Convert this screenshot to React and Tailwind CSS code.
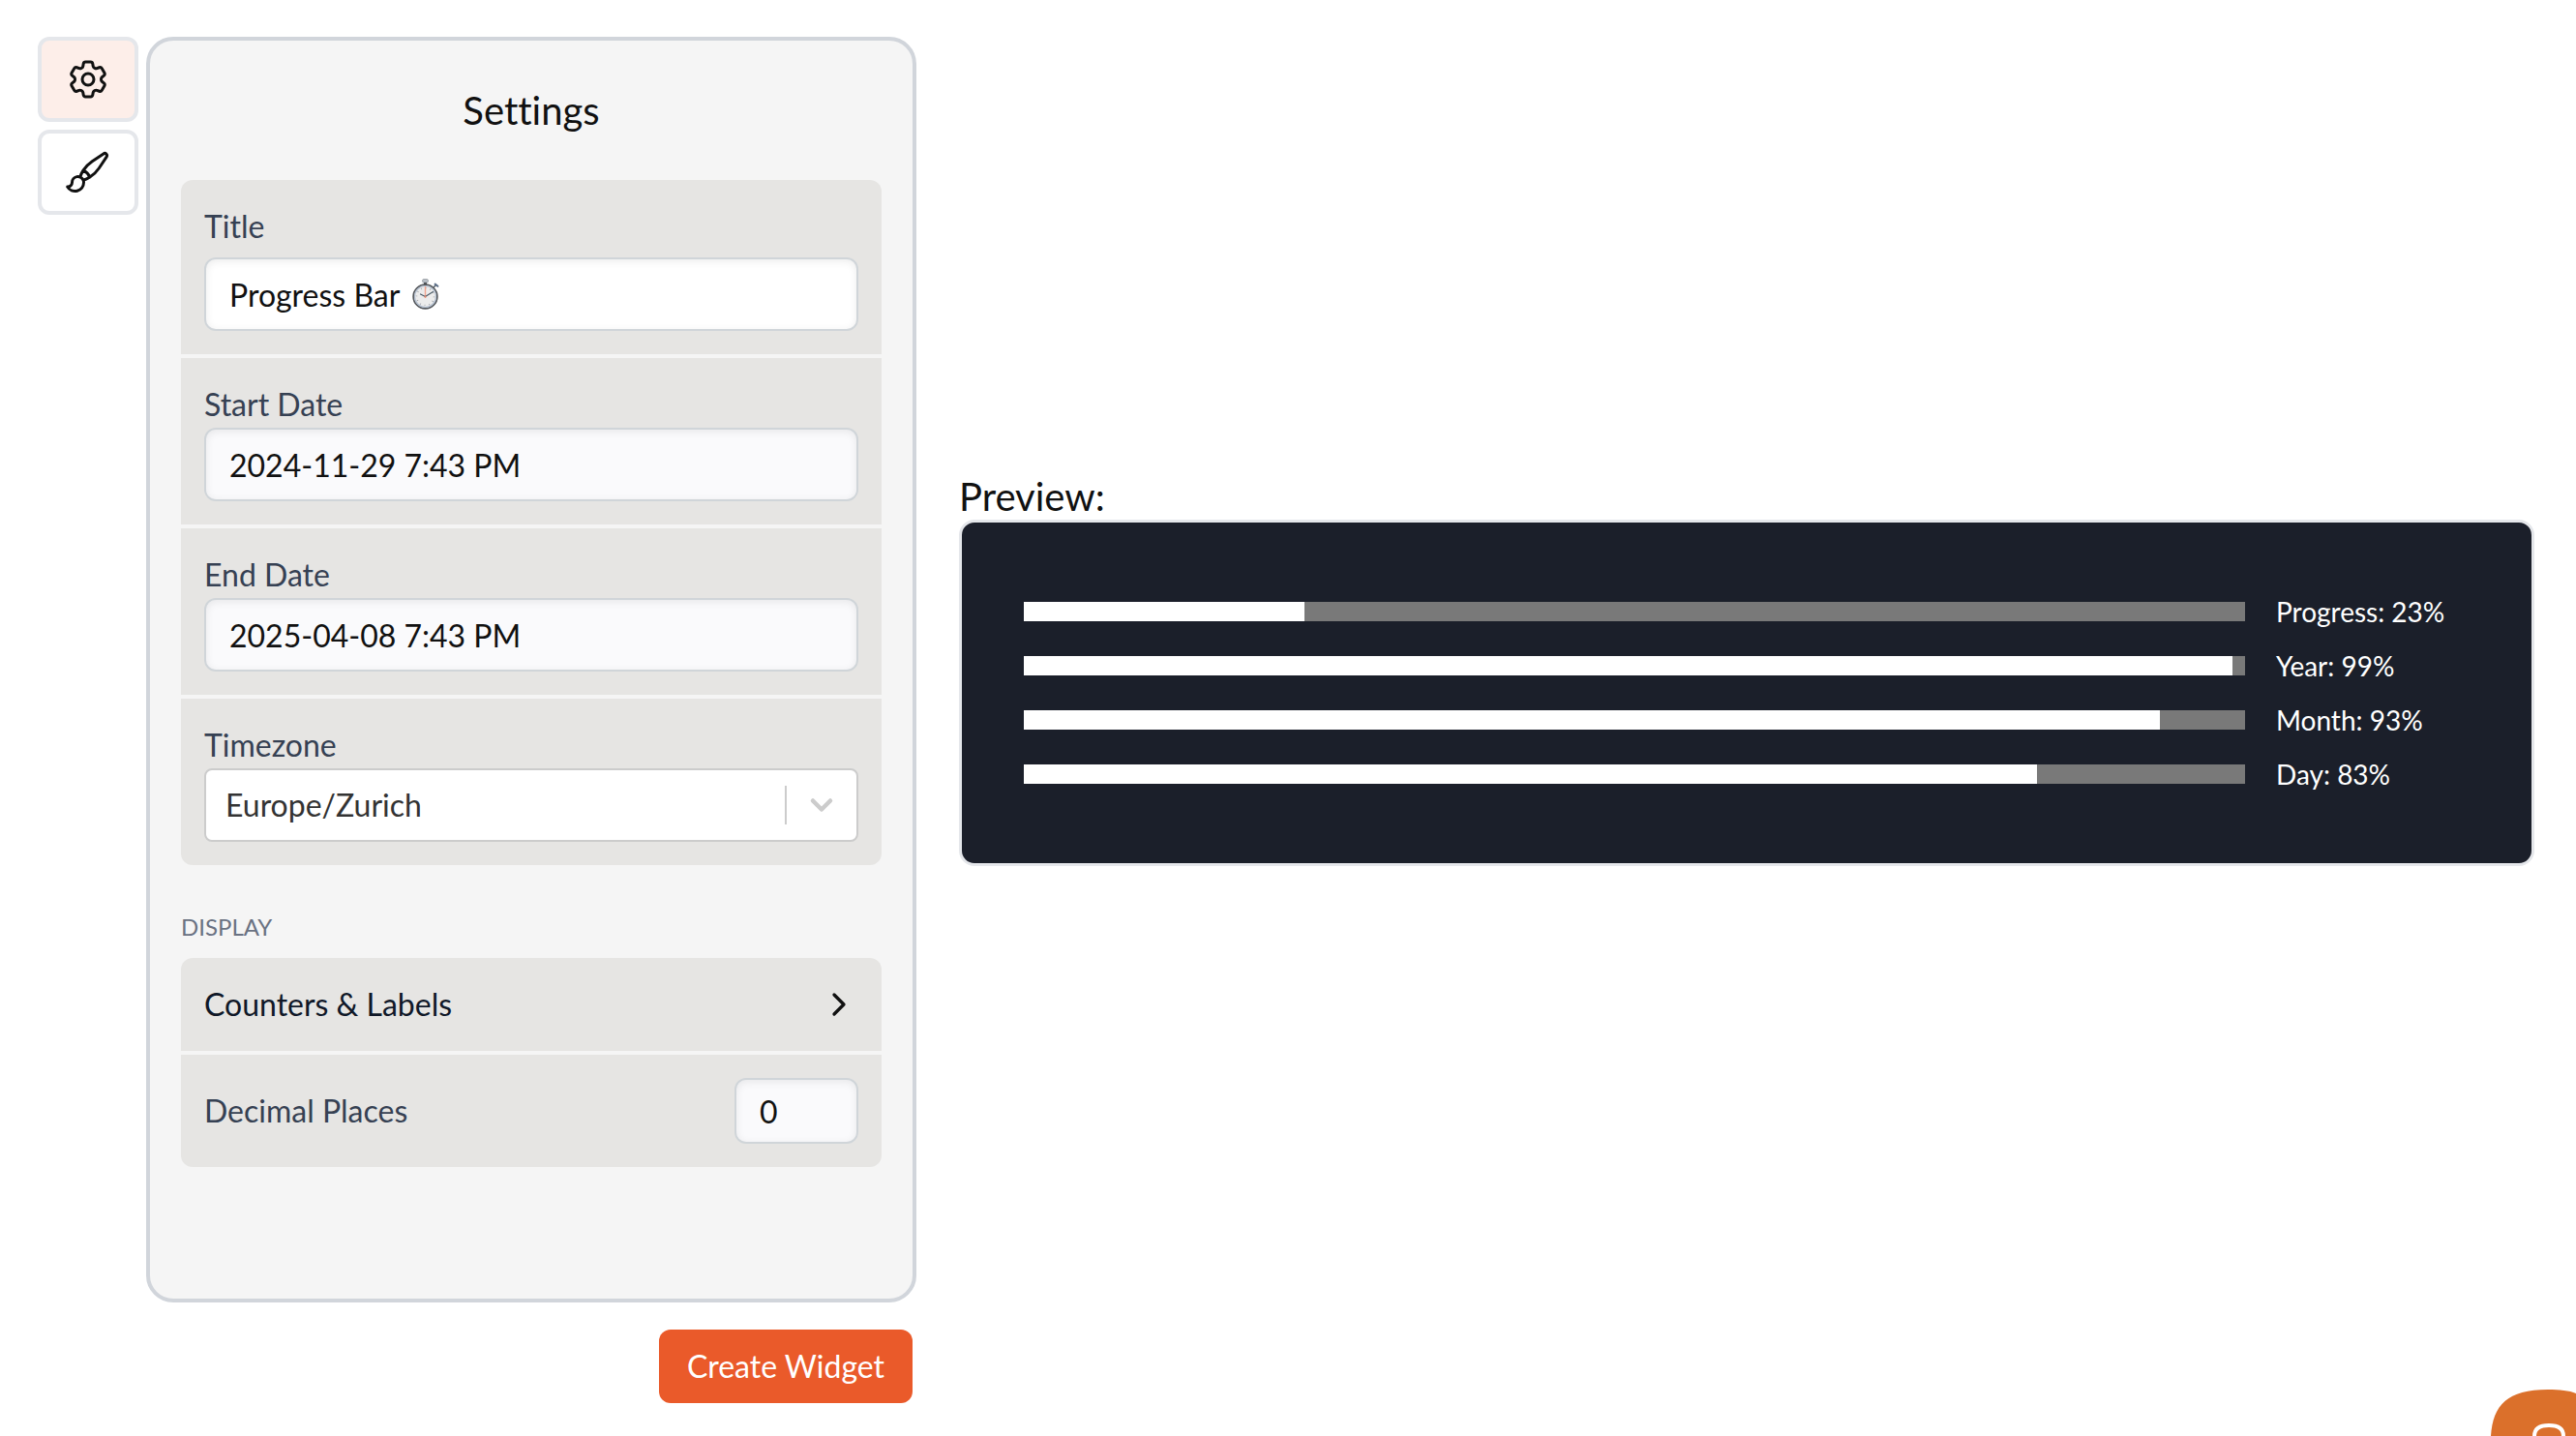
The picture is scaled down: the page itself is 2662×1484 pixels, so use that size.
import { useState } from 'react';
import { ChevronDown, ChevronRight } from 'lucide-react';
import { HiOutlineCog6Tooth, HiOutlinePaintBrush } from 'react-icons/hi2';
import { clsx } from 'clsx';

const tabs = [
  { id: 'settings', name: 'Settings', icon: HiOutlineCog6Tooth },
  { id: 'style', name: 'Style', icon: HiOutlinePaintBrush },
];

const bars = [
  { label: 'Progress', value: 23 },
  { label: 'Year', value: 99 },
  { label: 'Month', value: 93 },
  { label: 'Day', value: 83 },
];

const inputClass =
  'block h-[76px] w-full rounded-xl border-2 border-[#d0d5d9] px-6 text-[32px] text-[#111] shadow-[inset_0_2px_8px_rgba(0,0,0,0.08)]';

function Stopwatch() {
  return (
    <svg className="h-8 w-7" viewBox="0 0 28 32" fill="none" aria-hidden="true">
      <rect x="10.5" y="0.5" width="6" height="3.5" rx="1.5" fill="#b9bfc6" stroke="#8b9299" strokeWidth="0.7" />
      <path d="M12 4h3v3h-3z" fill="#4b4f54" />
      <path d="M22 9l3-3" stroke="#5b6570" strokeWidth="1.6" />
      <path d="M23.6 5.6l2.8 2.2" stroke="#5d6f88" strokeWidth="2" strokeLinecap="round" />
      <circle cx="13.5" cy="18.5" r="12.3" fill="#ececec" stroke="#55585c" strokeWidth="1.8" />
      <circle cx="13.5" cy="18.5" r="11" stroke="#b4c0d0" strokeWidth="1.2" />
      <circle cx="13.5" cy="18.5" r="9" stroke="#a0a3a8" strokeWidth="1.6" strokeDasharray="0.8 3.912" />
      <path d="M13.5 20V8" stroke="#f2a48e" strokeWidth="1.4" />
      <path d="M13.5 18.5l8-5M13.5 18.5l-5-2.6" stroke="#4a5a66" strokeWidth="1.1" strokeLinecap="round" />
      <circle cx="13.5" cy="18.5" r="1" fill="#e58a70" />
    </svg>
  );
}

function Field({ id, label, className, children }) {
  return (
    <div className="bg-[#e6e5e3] p-6">
      <label htmlFor={id} className={clsx('block text-[32px] leading-[48px] text-gray-700', className)}>
        {label}
      </label>
      {children}
    </div>
  );
}

function SettingsPanel() {
  return (
    <section className="min-h-[1308px] rounded-[28px] border-4 border-[#d1d5db] bg-[#f5f5f5] px-8">
      <h2 className="py-12 text-center text-[40px] leading-[48px]">Settings</h2>

      <div className="flex flex-col gap-1 overflow-hidden rounded-xl">
        <Field id="title" label="Title" className="mb-2">
          <div className="relative">
            <input id="title" type="text" defaultValue="Progress Bar" className={clsx(inputClass, 'bg-white')} />
            <span className="pointer-events-none absolute inset-y-0 left-[215px] flex items-center">
              <Stopwatch />
            </span>
          </div>
        </Field>
        <Field id="start" label="Start Date">
          <input id="start" type="text" defaultValue="2024-11-29 7:43 PM" className={clsx(inputClass, 'bg-[#fafafc]')} />
        </Field>
        <Field id="end" label="End Date">
          <input id="end" type="text" defaultValue="2025-04-08 7:43 PM" className={clsx(inputClass, 'bg-[#fafafc]')} />
        </Field>
        <Field id="timezone" label="Timezone">
          <div className="relative">
            <select
              id="timezone"
              className="block h-[76px] w-full appearance-none rounded-lg border-2 border-[#ccc] bg-white px-5 text-[32px] text-[#333]"
            >
              <option>Europe/Zurich</option>
            </select>
            <div className="pointer-events-none absolute inset-y-0 right-0 flex items-center gap-[18px] pr-5 text-[#ccc]">
              <span className="h-10 w-0.5 bg-[#ccc]" />
              <ChevronDown className="size-9" strokeWidth={3} aria-hidden="true" />
            </div>
          </div>
        </Field>
      </div>

      <h3 className="pt-12 pb-4 text-2xl leading-8 text-gray-500">DISPLAY</h3>

      <div className="flex flex-col gap-1 overflow-hidden rounded-xl">
        <button
          type="button"
          className="flex w-full items-center justify-between bg-[#e6e5e3] p-6 text-left text-[32px] leading-[48px] text-gray-900"
        >
          Counters &amp; Labels
          <ChevronRight className="size-10 text-[#111]" aria-hidden="true" />
        </button>
        <div className="flex items-center justify-between bg-[#e6e5e3] p-6">
          <label htmlFor="decimals" className="text-[32px] leading-[48px] text-gray-700">
            Decimal Places
          </label>
          <input
            id="decimals"
            type="text"
            inputMode="numeric"
            defaultValue="0"
            className="h-[68px] w-32 rounded-xl border-2 border-[#d0d5d9] bg-[#fafafc] px-6 text-[32px] text-[#111] shadow-[inset_0_2px_8px_rgba(0,0,0,0.08)]"
          />
        </div>
      </div>
    </section>
  );
}

function Preview() {
  return (
    <section className="min-w-0 flex-1">
      <h2 className="text-[40px] leading-[48px]">Preview:</h2>
      <div className="rounded-2xl border-3 border-gray-200 bg-[#1b1f2a] p-16 text-[28px] text-white">
        {bars.map((bar) => (
          <div key={bar.label} className="flex h-14 items-center gap-8">
            <div className="h-5 flex-1 bg-[#797979]">
              <div className="h-full bg-white" style={{ width: `${bar.value}%` }} />
            </div>
            <span className="w-[200px] whitespace-nowrap">
              {bar.label}: {bar.value}%
            </span>
          </div>
        ))}
      </div>
    </section>
  );
}

export default function App() {
  const [activeTab, setActiveTab] = useState('settings');

  return (
    <main className="min-h-screen overflow-hidden bg-white pt-[38px] pr-[43px] pl-[39px] font-['Lato',sans-serif] text-[#111] [font-variant-ligatures:none]">
      <div className="flex items-center gap-11">
        <div className="flex gap-2 self-stretch">
          <nav className="flex flex-col gap-2">
            {tabs.map((tab) => (
              <button
                key={tab.id}
                type="button"
                aria-label={tab.name}
                onClick={() => setActiveTab(tab.id)}
                className={clsx(
                  'flex h-[88px] w-[104px] items-center justify-center rounded-xl border-4 border-gray-200',
                  activeTab === tab.id ? 'bg-[#fdeee9]' : 'bg-white'
                )}
              >
                <tab.icon className="size-12" aria-hidden="true" />
              </button>
            ))}
          </nav>
          <div className="w-[796px]">
            <SettingsPanel />
          </div>
        </div>
        <Preview />
      </div>

      <div className="mt-7 flex w-[904px] justify-end">
        <button type="button" className="h-[76px] w-[262px] rounded-xl bg-[#ea5a2a] text-[32px] text-white">
          Create Widget
        </button>
      </div>

      {/* Chat launcher, partly off the corner of the window */}
      <button type="button" aria-label="Open chat" className="fixed right-0 bottom-0">
        <svg className="h-12 w-[89px]" viewBox="0 0 89 48" fill="none" aria-hidden="true">
          <path d="M1 48C3 16 18 0 60 0c12 0 22 1 29 4v44z" fill="#db702b" />
          <path d="M46 52V48c0-7 4-11 15-11s15 4 15 11v4" stroke="#fff" strokeWidth="4" />
        </svg>
      </button>
    </main>
  );
}
